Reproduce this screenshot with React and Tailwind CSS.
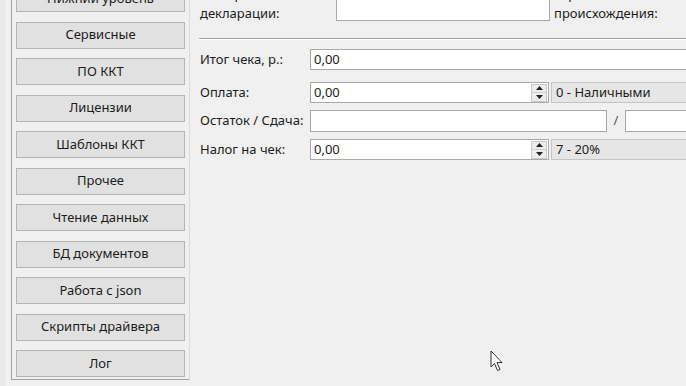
import React from "react";

const font = { fontFamily: '"Noto Sans", "DejaVu Sans", sans-serif' };

const buttons = [
  "Нижний уровень",
  "Сервисные",
  "ПО ККТ",
  "Лицензии",
  "Шаблоны ККТ",
  "Прочее",
  "Чтение данных",
  "БД документов",
  "Работа с json",
  "Скрипты драйвера",
  "Лог",
];

function Spinner() {
  return (
    <div className="flex flex-col w-[16px] h-[18px] border border-[#c9c9c9] bg-[#ececec] self-center mr-[1px]">
      <div className="flex-1 flex items-center justify-center border-b border-[#d0d0d0]">
        <svg width="7" height="4" viewBox="0 0 7 4">
          <path d="M0 4 L3.5 0 L7 4 Z" fill="#222" />
        </svg>
      </div>
      <div className="flex-1 flex items-center justify-center">
        <svg width="7" height="4" viewBox="0 0 7 4">
          <path d="M0 0 L3.5 4 L7 0 Z" fill="#222" />
        </svg>
      </div>
    </div>
  );
}

function SpinRow({ label, value, combo, mt }) {
  return (
    <div className={`flex items-center h-[21px] ${mt}`}>
      <span className="w-[110px] shrink-0">{label}</span>
      <div className="flex w-[239px] h-full border border-[#a9a9a9] bg-white shrink-0">
        <span className="flex-1 pl-[3px] leading-[19px]">{value}</span>
        <Spinner />
      </div>
      <div className="ml-[2px] w-[200px] h-full border border-[#c4c4c4] bg-[#e6e6e6] pl-[4px] leading-[19px] shrink-0">
        {combo}
      </div>
    </div>
  );
}

export default function App() {
  return (
    <div
      className="relative w-[686px] h-[386px] overflow-hidden bg-[#f0f0f0] text-[13px] text-[#1c1c1c] flex"
      style={font}
    >
      <div className="w-[7px] shrink-0 bg-[#e9ebea] border-r border-[#f7f7f7]" />
      <div className="pl-[4px] shrink-0">
        <div className="w-[179px] mt-[-19px] h-[399px] border border-[#a0a0a0] border-t-0 border-r-[#dadada] pl-[4px] pr-[4px] pt-[4px] flex flex-col gap-[9.5px]">
          {buttons.map((b) => (
            <div
              key={b}
              className="h-[27px] shrink-0 border border-[#b4b4b4] bg-[#e1e1e1] flex items-center justify-center"
            >
              {b}
            </div>
          ))}
        </div>
      </div>

      <div className="flex-1 flex flex-col pl-[10px] min-w-0">
        <div className="flex mt-[-20px] h-[41px] shrink-0">
          <div className="w-[136px] shrink-0 leading-[19px] mt-[5px] whitespace-nowrap">
            <div>Номер таможенной</div>
            <div>декларации:</div>
          </div>
          <div className="w-[214px] h-full border border-[#a9a9a9] bg-white shrink-0" />
          <div className="ml-[4px] leading-[19px] mt-[5px] whitespace-nowrap">
            <div>Страна</div>
            <div>происхождения:</div>
          </div>
        </div>

        <div className="mt-[17px] ml-[-1px] h-[2px] border-t border-[#a3a3a3] border-b border-b-white w-[600px] shrink-0" />

        <div className="flex items-center h-[21px] mt-[9px]">
          <span className="w-[110px] shrink-0">Итог чека, р.:</span>
          <div className="w-[400px] h-full border border-[#a9a9a9] bg-white pl-[3px] leading-[19px] shrink-0">
            0,00
          </div>
        </div>

        <SpinRow label="Оплата:" value="0,00" combo="0 - Наличными" mt="mt-[12px]" />

        <div className="flex items-center h-[22px] mt-[7px]">
          <span className="w-[110px] shrink-0 whitespace-nowrap">Остаток / Сдача:</span>
          <div className="w-[297px] h-full border border-[#a9a9a9] bg-white shrink-0" />
          <span className="w-[18px] text-center shrink-0 text-[#555]">/</span>
          <div className="w-[100px] h-full border border-[#a9a9a9] bg-white shrink-0" />
        </div>

        <SpinRow label="Налог на чек:" value="0,00" combo="7 - 20%" mt="mt-[7px]" />
      </div>

      <svg
        className="absolute left-[490px] top-[350px]"
        width="14"
        height="22"
        viewBox="0 0 14 22"
      >
        <path
          d="M1 1 L1 17 L4.5 13.5 L7.5 20.5 L10 19.5 L7 12.5 L12 12.5 Z"
          fill="white"
          stroke="#333"
          strokeWidth="1"
          strokeLinejoin="round"
        />
      </svg>
    </div>
  );
}
